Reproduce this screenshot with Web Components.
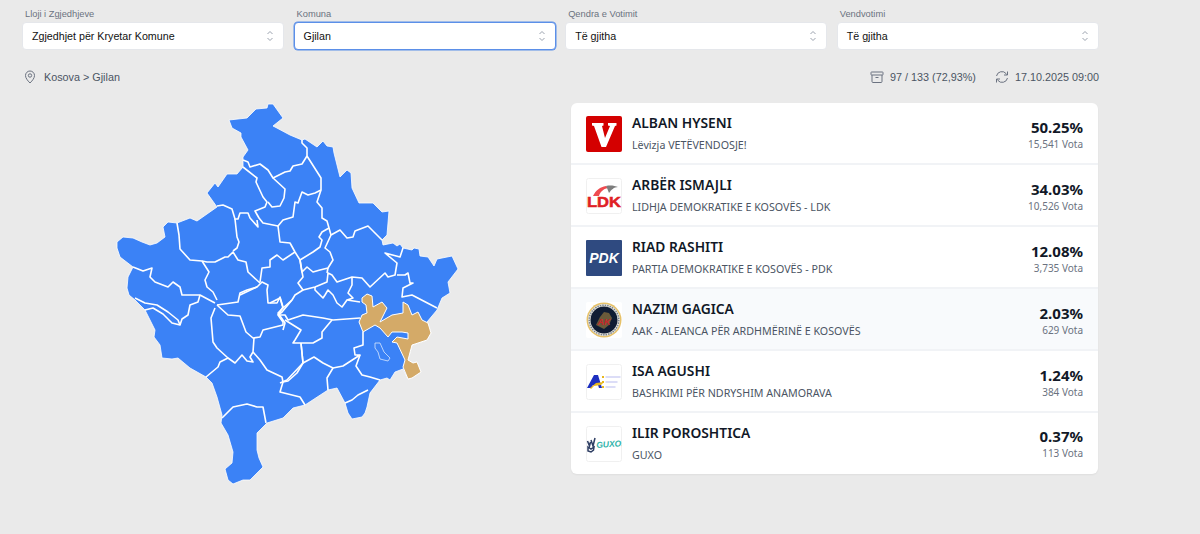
<!DOCTYPE html>
<html lang="sq">
<head>
<meta charset="utf-8">
<title>Rezultatet</title>
<style>
  html, body { margin: 0; height: 100%; background: #eaeaea; }
  body { font-family: "Liberation Sans", Arial, sans-serif; overflow: hidden; }
  .page { width: 1077px; margin-left: 22px; }
  .filters { display: grid; grid-template-columns: repeat(4, 1fr); gap: 9.3px; padding-top: 8px; }
  .content { display: flex; align-items: flex-start; }
</style>
</head>
<body>
<div class="page">
  <div class="filters">
    <filter-select label="Lloji i Zgjedhjeve" value="Zgjedhjet për Kryetar Komune"></filter-select>
    <filter-select label="Komuna" value="Gjilan" active></filter-select>
    <filter-select label="Qendra e Votimit" value="Të gjitha"></filter-select>
    <filter-select label="Vendvotimi" value="Të gjitha"></filter-select>
  </div>
  <status-bar></status-bar>
  <div class="content">
    <kosovo-map></kosovo-map>
    <result-list>
      <candidate-row name="ALBAN HYSENI" party="Lëvizja VETËVENDOSJE!" percent="50.25%" votes="15,541 Vota">
        <party-logo slot="logo" kind="vv"></party-logo>
      </candidate-row>
      <candidate-row name="ARBËR ISMAJLI" party="LIDHJA DEMOKRATIKE E KOSOVËS - LDK" percent="34.03%" votes="10,526 Vota">
        <party-logo slot="logo" kind="ldk"></party-logo>
      </candidate-row>
      <candidate-row name="RIAD RASHITI" party="PARTIA DEMOKRATIKE E KOSOVËS - PDK" percent="12.08%" votes="3,735 Vota">
        <party-logo slot="logo" kind="pdk"></party-logo>
      </candidate-row>
      <candidate-row name="NAZIM GAGICA" party="AAK - ALEANCA PËR ARDHMËRINË E KOSOVËS" percent="2.03%" votes="629 Vota" highlight>
        <party-logo slot="logo" kind="aak"></party-logo>
      </candidate-row>
      <candidate-row name="ISA AGUSHI" party="BASHKIMI PËR NDRYSHIM ANAMORAVA" percent="1.24%" votes="384 Vota">
        <party-logo slot="logo" kind="bna"></party-logo>
      </candidate-row>
      <candidate-row name="ILIR POROSHTICA" party="GUXO" percent="0.37%" votes="113 Vota">
        <party-logo slot="logo" kind="guxo"></party-logo>
      </candidate-row>
    </result-list>
  </div>
</div>

<script>
// Filter dropdown with a small label on top
class FilterSelect extends HTMLElement {
  connectedCallback() {
    const root = this.attachShadow({ mode: 'open' });
    root.innerHTML = `
      <style>
        :host { display: block; min-width: 0; }
        .label { font-size: 9.300px; line-height: 12px; color: #6b7280; padding-left: 3px; margin-bottom: 2px; }
        .box {
          height: 28px; box-sizing: border-box; background: #fff; border: 1px solid #e5e7eb;
          border-radius: 4px; display: flex; align-items: center; justify-content: space-between;
          padding: 0 7px 0 9px; font-size: 10.700px; color: #111;
        }
        :host([active]) .box { border-color: #5b8fe8; box-shadow: 0 0 0 .5px #5b8fe8; }
        svg { width: 12px; height: 14px; flex: none; }
      </style>
      <div class="label">${this.getAttribute('label')}</div>
      <div class="box">
        <span>${this.getAttribute('value')}</span>
        <svg viewBox="0 0 12 14" fill="none" stroke="#9ca3af" stroke-width="1"><path d="M3.500 5 6 2.500 8.500 5M3.500 9 6 11.500 8.500 9"/></svg>
      </div>`;
  }
}

// Breadcrumb on the left, counters on the right
class StatusBar extends HTMLElement {
  connectedCallback() {
    const root = this.attachShadow({ mode: 'open' });
    root.innerHTML = `
      <style>
        :host { display: flex; justify-content: space-between; align-items: center; height: 16px; margin-top: 19px; font-size: 10.800px; color: #4b5563; }
        .group { display: flex; align-items: center; }
        svg { width: 14px; height: 14px; flex: none; fill: none; stroke: #6b7280; stroke-width: 1; }
        .crumb svg { margin: 0 7px 0 1px; }
        .stat { margin-left: 19px; display: flex; align-items: center; }
        .stat svg { margin-right: 6px; }
      </style>
      <div class="group crumb">
        <svg viewBox="0 0 14 14"><path d="M7 13C4.500 10.500 2.500 8 2.500 5.500a4.500 4.500 0 0 1 9 0C11.500 8 9.500 10.500 7 13Z"/><circle cx="7" cy="5.500" r="1.700"/></svg>
        <span>Kosova &gt; Gjilan</span>
      </div>
      <div class="group">
        <div class="stat">
          <svg viewBox="0 0 14 14"><rect x="1" y="2" width="12" height="3" rx=".5"/><path d="M2 5v6.500a1 1 0 0 0 1 1h8a1 1 0 0 0 1-1V5M5.500 7.500h3"/></svg>
          <span>97 / 133 (72,93%)</span>
        </div>
        <div class="stat">
          <svg viewBox="0 0 14 14"><path d="M1.500 6a5.500 5.500 0 0 1 9.700-2.300L12.500 5M12.500 1.500V5H9M12.500 8a5.500 5.500 0 0 1-9.700 2.300L1.500 9M1.500 12.500V9H5"/></svg>
          <span>17.10.2025 09:00</span>
        </div>
      </div>`;
  }
}

// Municipalities map, coordinates are in page pixels (viewBox starts at the column corner)
const OUTLINE = '229,120 247,118 256,109 267,108 268,104 273,104 283,118 273,126 275,127 290,135 302,140 305,139 317,147 323,141 327,146 333,147 334,153 340,177 347,170 351,173 352,188 359,203 373,203 382,212 389,211 387,235 382,240 383,245 393,243 397,246 400,244 403,248 412,250 414,248 419,249 420,256 428,257 434,266 437,259 452,256 458,269 448,282 450,293 442,298 437,310 427,322 431,333 427,340 412,345 408,360 413,363 417,362 421,372 412,378 408,379 403,369 395,372 390,380 387,378 380,380 370,393 367,407 365,413 362,417 352,419 348,413 345,403 337,388 328,390 305,405 293,408 283,418 267,423 265,425 257,433 257,450 259,458 263,467 250,480 243,480 233,484 228,480 225,469 232,463 233,452 228,435 221,423 222,415 217,397 212,383 206,377 190,368 178,358 172,359 162,358 160,345 154,337 155,330 145,310 135,300 129,295 127,288 128,277 133,267 120,257 117,248 117,242 123,237 133,238 142,242 150,245 157,243 165,237 163,227 168,222 177,223 190,218 197,221 217,207 207,193 215,183 218,187 227,174 237,174 243,167 243,157 248,150 241,137 241,133 232,128';
const TAN = '362,298 367,294 372,296 373,307 382,302 387,308 380,322 392,315 403,313 403,302 408,305 412,315 418,312 422,320 428,323 431,333 427,340 412,345 408,360 413,363 417,362 421,372 412,378 408,379 403,367 405,360 397,343 392,342 397,337 408,339 408,333 402,332 392,332 388,337 380,328 375,325 363,332 359,322 362,315 367,313 366,305 362,302';
const LAKE = '375,343 380,343 384,352 390,358 388,361 380,359 378,352 375,348';
const BORDERS = [
  '243,160 248,162 250,167 260,164 268,170 273,178 285,172 290,171 293,166 302,164 307,156 307,148 302,143 302,140',
  '307,156 321,178 321,190 317,202 322,208 322,218 327,221 331,235',
  '321,190 315,193 308,195 302,192 298,203 295,202 293,217 283,220 278,226 263,223 259,218 255,211 265,207 267,202 263,197 256,182 257,178 243,167',
  '273,178 285,189 284,198 280,206 272,207 268,202',
  '217,206 223,205 232,209 235,219 238,219 240,213 248,213 250,218 258,227 257,220',
  '235,219 237,237 239,242 237,248 233,251',
  '177,223 179,235 180,249 190,260 202,261 207,262 215,262 225,257 228,257 233,252 238,260 246,262 248,272 260,283',
  '202,261 209,272 205,280 207,287 213,292 217,300',
  '133,267 143,271 152,268 150,277 155,282 168,287 173,282 180,287 182,295 200,295 215,303',
  '278,226 280,242 290,243 295,252 300,260 302,272 303,277 298,283 303,290 295,295 292,300 283,308',
  '295,252 283,260 277,255 270,260 270,267 262,268 260,282',
  '240,295 257,287 262,282 268,285 267,290 268,303 277,303 280,297 283,307 278,315',
  '200,295 198,302 190,305 188,315 182,319 180,325 172,323 163,314 153,308 145,310',
  '135,298 145,303 157,305 168,312 178,320 180,325',
  '215,308 211,318 213,342 217,348 228,358 220,362 218,367 206,377',
  '228,358 235,363 242,355 247,361 253,362 250,357 253,352 254,338',
  '217,305 228,315 240,316 246,332 253,338 260,337 263,330 283,325 283,322 278,315 282,312 292,300',
  '217,305 238,302 240,293 247,290 257,287',
  '253,352 260,360 267,370 282,377 283,382 288,381 297,373 303,363 301,343',
  '283,382 280,392 300,397 305,405',
  '222,418 233,407 247,404 257,407 263,407 266,423',
  '270,303 280,298 283,308 278,313 285,323 283,330',
  '278,315 285,315 288,320 303,315 323,318 333,320 360,318',
  '303,290 315,287 327,282 328,273 332,275 337,282 352,277 362,278 370,287 385,273 388,277 395,275 397,263 385,253 400,257 403,248',
  '352,277 352,285 348,293 353,298 347,300 360,302',
  '315,287 315,290 323,298 325,295 328,290 333,295 337,303 342,307 347,300',
  '397,275 405,275 408,273 410,283 413,283 403,288 402,297 412,295 437,308',
  '328,268 327,273',
  '331,235 340,230 347,238 353,237 355,231 368,226 382,240',
  '331,235 325,248 330,252 333,260 328,268 320,270 313,272 307,267 302,272 300,260 313,252 320,247 322,240 319,237 322,232 329,228',
  '285,320 301,330 295,340 293,343 313,343 322,338 322,332 332,320',
  '301,343 303,363 287,380 280,383',
  '303,363 314,357 323,363 333,368 343,366 360,355 355,355 354,348 363,345 363,332',
  '333,368 327,378 328,390',
  '360,355 356,366 362,375 370,377 380,380',
  '345,403 352,400 358,395 368,390'
];

class KosovoMap extends HTMLElement {
  connectedCallback() {
    const root = this.attachShadow({ mode: 'open' });
    const lines = BORDERS.map(p => `<polyline points="${p}"/>`).join('');
    root.innerHTML = `
      <style>
        :host { display: block; flex: none; width: 549px; height: 410px; }
        svg { display: block; width: 549px; height: 410px; }
        .base { fill: #3b82f6; stroke: #fff; stroke-width: .8; stroke-linejoin: round; }
        .lines polyline { fill: none; stroke: #fff; stroke-width: 1.600; stroke-linejoin: round; }
        .tan { fill: #d4aa68; stroke: #fff; stroke-width: 1; stroke-linejoin: round; }
        .lake { fill: #3b82f6; stroke: #dbe8fd; stroke-width: .8; }
      </style>
      <svg viewBox="22 85 549 410">
        <polygon class="base" points="${OUTLINE}"/>
        <g class="lines">${lines}</g>
        <polygon class="tan" points="${TAN}"/>
        <polygon class="lake" points="${LAKE}"/>
      </svg>`;
  }
}

// White card holding the candidate rows
class ResultList extends HTMLElement {
  connectedCallback() {
    const root = this.attachShadow({ mode: 'open' });
    root.innerHTML = `
      <style>
        :host { display: block; width: 527px; margin-top: 18px; background: #fff; border-radius: 6px; overflow: hidden; box-shadow: 0 1px 2px rgba(0,0,0,.05); }
      </style>
      <slot></slot>`;
  }
}

class CandidateRow extends HTMLElement {
  connectedCallback() {
    const root = this.attachShadow({ mode: 'open' });
    root.innerHTML = `
      <style>
        :host { display: flex; align-items: center; height: 62px; box-sizing: border-box; padding: 2px 15px 0; border-bottom: 2px solid #f1f3f6; font-family: "Noto Sans", "Open Sans", sans-serif; }
        :host(:last-child) { border-bottom: 0; height: 61px; padding-top: 0; }
        :host([highlight]) { background: #f8fafc; }
        .logo { width: 36px; height: 36px; flex: none; }
        .text { margin-left: 10px; flex: 1; min-width: 0; padding-bottom: 3px; }
        .name { font-size: 13.800px; line-height: 20px; font-weight: 600; color: #111827; }
        .party { font-size: 10.700px; line-height: 14px; margin-top: 5px; color: #4b5563; }
        .num { text-align: right; padding-bottom: 1px; }
        .percent { font-size: 15px; line-height: 20px; font-weight: 700; color: #111827; }
        .votes { font-size: 10px; line-height: 14px; color: #6b7280; }
      </style>
      <div class="logo"><slot name="logo"></slot></div>
      <div class="text">
        <div class="name">${this.getAttribute('name')}</div>
        <div class="party">${this.getAttribute('party')}</div>
      </div>
      <div class="num">
        <div class="percent">${this.getAttribute('percent')}</div>
        <div class="votes">${this.getAttribute('votes')}</div>
      </div>`;
  }
}

// Party logos, drawn by hand on a 36x36 box
const LOGOS = {
  vv: `<rect width="36" height="36" rx="2" fill="#d40000"/>
       <path d="M6 7h11.500v2.500l-1.500.5 3 12 5-12-2-.5V7h8.500v2.500l-1.500.5-9 21h-4.500L8 10l-2-.5Z" fill="#fff"/>`,
  ldk: `<rect x=".5" y=".5" width="35" height="35" rx="2" fill="#fff" stroke="#f0f0f0"/>
        <path d="M7 18C10 12 14 9 20 8l2 2C17 11 14 14 13 18Z" fill="#ef4b50"/>
        <path d="M20 8C25 7 29 8 32 9 28 9 25 12 23 15l-2-5Z" fill="#7d7d7d"/>
        <text x="18" y="29" text-anchor="middle" font-family="Liberation Sans, sans-serif" font-weight="700" font-size="14" textLength="34" lengthAdjust="spacingAndGlyphs" fill="#e01f26" stroke="#e01f26" stroke-width=".5">LDK</text>`,
  pdk: `<rect width="36" height="36" fill="#2f4a80" rx="1"/>
        <text x="18" y="23" text-anchor="middle" font-family="Liberation Sans, sans-serif" font-style="italic" font-weight="700" font-size="14" fill="#fff">PDK</text>`,
  aak: `<rect width="36" height="36" rx="2" fill="#fff"/>
        <circle cx="18" cy="18" r="17.500" fill="#e6c169"/>
        <circle cx="18" cy="18" r="16" fill="#e8e6df"/>
        <circle cx="18" cy="18" r="14.800" fill="none" stroke="#77808c" stroke-width="1.400" stroke-dasharray="1.500 1"/>
        <circle cx="18" cy="18" r="13.500" fill="#101c33"/>
        <path d="M10 23 14 15l4-5 5 1 3 5-3 7-5 4-4-2Z" fill="#6b5a3a"/>
        <text x="18" y="23" text-anchor="middle" font-family="Liberation Sans, sans-serif" font-style="italic" font-weight="700" font-size="9" fill="#c8262c">AK</text>`,
  bna: `<rect x=".5" y=".5" width="35" height="35" rx="2" fill="#fff" stroke="#f0f0f0"/>
        <path d="M1 24 8 11h4l4 13h-3l-1-3H7l-2 3Z" fill="#1d2fc0"/>
        <path d="M4 24 10 19l8-1-3 3-7 1-3 3Z" fill="#e8b71e"/>
        <path d="M16 12h2v2h-2Zm0 5h2v2h-2Zm0 5h2v2h-2Z" fill="#e8b71e"/>
        <path d="M19.500 13h15M19.500 18h12M19.500 23h10" stroke="#b9bcf0" stroke-width="1.200"/>`,
  guxo: `<rect x=".5" y=".5" width="35" height="35" rx="2" fill="#fff" stroke="#f0f0f0"/>
         <path d="M1.500 15l2 5 1-4M5 14l2 6 2-8M2 21l3 2 3-2-.5 3-2.500 2-3-1Z" fill="none" stroke="#2e3e63" stroke-width="1.500"/>
         <text x="10.500" y="22" font-family="Liberation Sans, sans-serif" font-style="italic" font-weight="700" font-size="8.500" fill="#2fb3aa" transform="rotate(-4 10.500 22)">GUXO!</text>`
};

class PartyLogo extends HTMLElement {
  connectedCallback() {
    const root = this.attachShadow({ mode: 'open' });
    root.innerHTML = `
      <style>
        :host { display: block; width: 36px; height: 36px; }
        svg { display: block; width: 36px; height: 36px; }
      </style>
      <svg viewBox="0 0 36 36">${LOGOS[this.getAttribute('kind')]}</svg>`;
  }
}

customElements.define('filter-select', FilterSelect);
customElements.define('status-bar', StatusBar);
customElements.define('kosovo-map', KosovoMap);
customElements.define('result-list', ResultList);
customElements.define('candidate-row', CandidateRow);
customElements.define('party-logo', PartyLogo);
</script>
</body>
</html>
